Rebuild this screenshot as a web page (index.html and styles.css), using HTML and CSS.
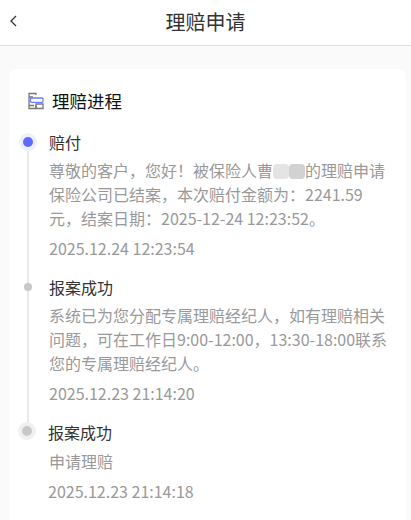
FILE: index.html
```html
<!DOCTYPE html>
<html lang="zh-CN">
<head>
<meta charset="utf-8">
<title>理赔申请</title>
<link rel="stylesheet" href="styles.css">
</head>
<body>
<header class="nav">
  <svg class="back" width="9" height="12" viewBox="0 0 9 12"><path d="M7 1 2 6l5 5" fill="none" stroke="#333" stroke-width="1.3"/></svg>
  <h1 class="nav-title">理赔申请</h1>
</header>
<main class="card">
  <div class="card-head">
    <svg class="head-icon" width="18" height="18" viewBox="0 0 18 18" fill="none">
      <path d="M6 5H2V1.500H9V3M2 5v8.500M7 13.500H2M9 16.500V13M2 13v3.500h7" stroke="#777" stroke-width="1.300"/>
      <rect x="3.500" y="6" width="12.500" height="4.300" rx="1" stroke="#6b7cff" stroke-width="1.300"/>
      <path d="M9 12h7v4.500H9z" stroke="#777" stroke-width="1.300"/>
    </svg>
    <h2 class="card-title">理赔进程</h2>
  </div>
  <ol class="timeline">
    <li class="step">
      <span class="dot dot-active"></span>
      <div class="step-title">赔付</div>
      <p class="step-text">尊敬的客户，您好！被保险人曹<span class="blur"><span class="blur-a"></span><span class="blur-b"></span></span>的理赔申请保险公司已结案，本次赔付金额为：2241.59元，结案日期：2025-12-24 12:23:52。</p>
      <div class="step-time">2025.12.24 12:23:54</div>
    </li>
    <li class="step">
      <span class="dot"></span>
      <div class="step-title">报案成功</div>
      <p class="step-text">系统已为您分配专属理赔经纪人，如有理赔相关问题，可在工作日9:00-12:00，13:30-18:00联系您的专属理赔经纪人。</p>
      <div class="step-time">2025.12.23 21:14:20</div>
    </li>
    <li class="step step-last">
      <span class="dot dot-end"></span>
      <div class="step-title">报案成功</div>
      <p class="step-text">申请理赔</p>
      <div class="step-time">2025.12.23 21:14:18</div>
    </li>
  </ol>
</main>
</body>
</html>
```
FILE: styles.css
```css
* { box-sizing: border-box; }
html, body { margin: 0; height: 520px; overflow: hidden; }
body {
  background: #fafafa;
  font-family: "Noto Sans CJK SC", "Noto Sans", sans-serif;
  color: #222;
}
.nav {
  height: 46px;
  background: #fff;
  border-bottom: 1px solid #dedede;
  display: flex;
  align-items: center;
  justify-content: center;
  position: relative;
}
.back { position: absolute; left: 9px; top: 15px; }
.nav-title { margin: 0 0 2px; font-size: 20px; line-height: 28px; font-weight: 400; color: #333; }
.card {
  margin: 23px 5px 0 9px;
  background: #fff;
  border-radius: 8px 8px 0 0;
  padding: 20px 16px 0 19px;
  height: 460px;
}
.card-head { display: flex; align-items: center; gap: 7px; height: 24px; }
.head-icon { flex: none; margin-left: -1px; }
.card-title { margin: 0; font-size: 17.500px; line-height: 24px; font-weight: 400; color: #111; }
.timeline { list-style: none; margin: 17px 0 0; padding: 0; }
.step { position: relative; padding-left: 21px; padding-bottom: 15px; }
.step::before {
  content: "";
  position: absolute;
  left: -1px;
  top: 10px;
  bottom: -10px;
  width: 2px;
  background: #e8e8e8;
}
.step-last::before { display: none; }
.dot {
  position: absolute;
  left: -4px;
  top: 8px;
  width: 8px;
  height: 8px;
  border-radius: 50%;
  background: #c8c8c8;
}
.dot-active {
  left: -5px; top: 7px; width: 10px; height: 10px;
  background: #5b6cff;
  box-shadow: 0 0 0 4px #eef0ff;
}
.dot-end {
  left: -6px; top: 6px; width: 10px; height: 10px;
  background: #c8c8c8;
  box-shadow: 0 0 0 4px #f0f0f0;
}
.step-title { font-size: 16px; line-height: 24px; color: #333; }
.step-text { margin: 4px 0 0; font-size: 16px; line-height: 24px; color: #999; }
.step-time { margin-top: 6px; font-size: 16px; line-height: 24px; color: #999; }
.step-last .step-title, .step-last .step-text, .step-last .step-time { margin-left: -1px; }
.step-last .step-text { margin-top: 5px; margin-left: 0; }
.blur { display: inline-flex; vertical-align: -2px; height: 15px; }
.blur-a { width: 16px; background: #e4e4e4; border-radius: 4px; }
.blur-b { width: 16px; background: #d2d2d2; border-radius: 4px; }
```
